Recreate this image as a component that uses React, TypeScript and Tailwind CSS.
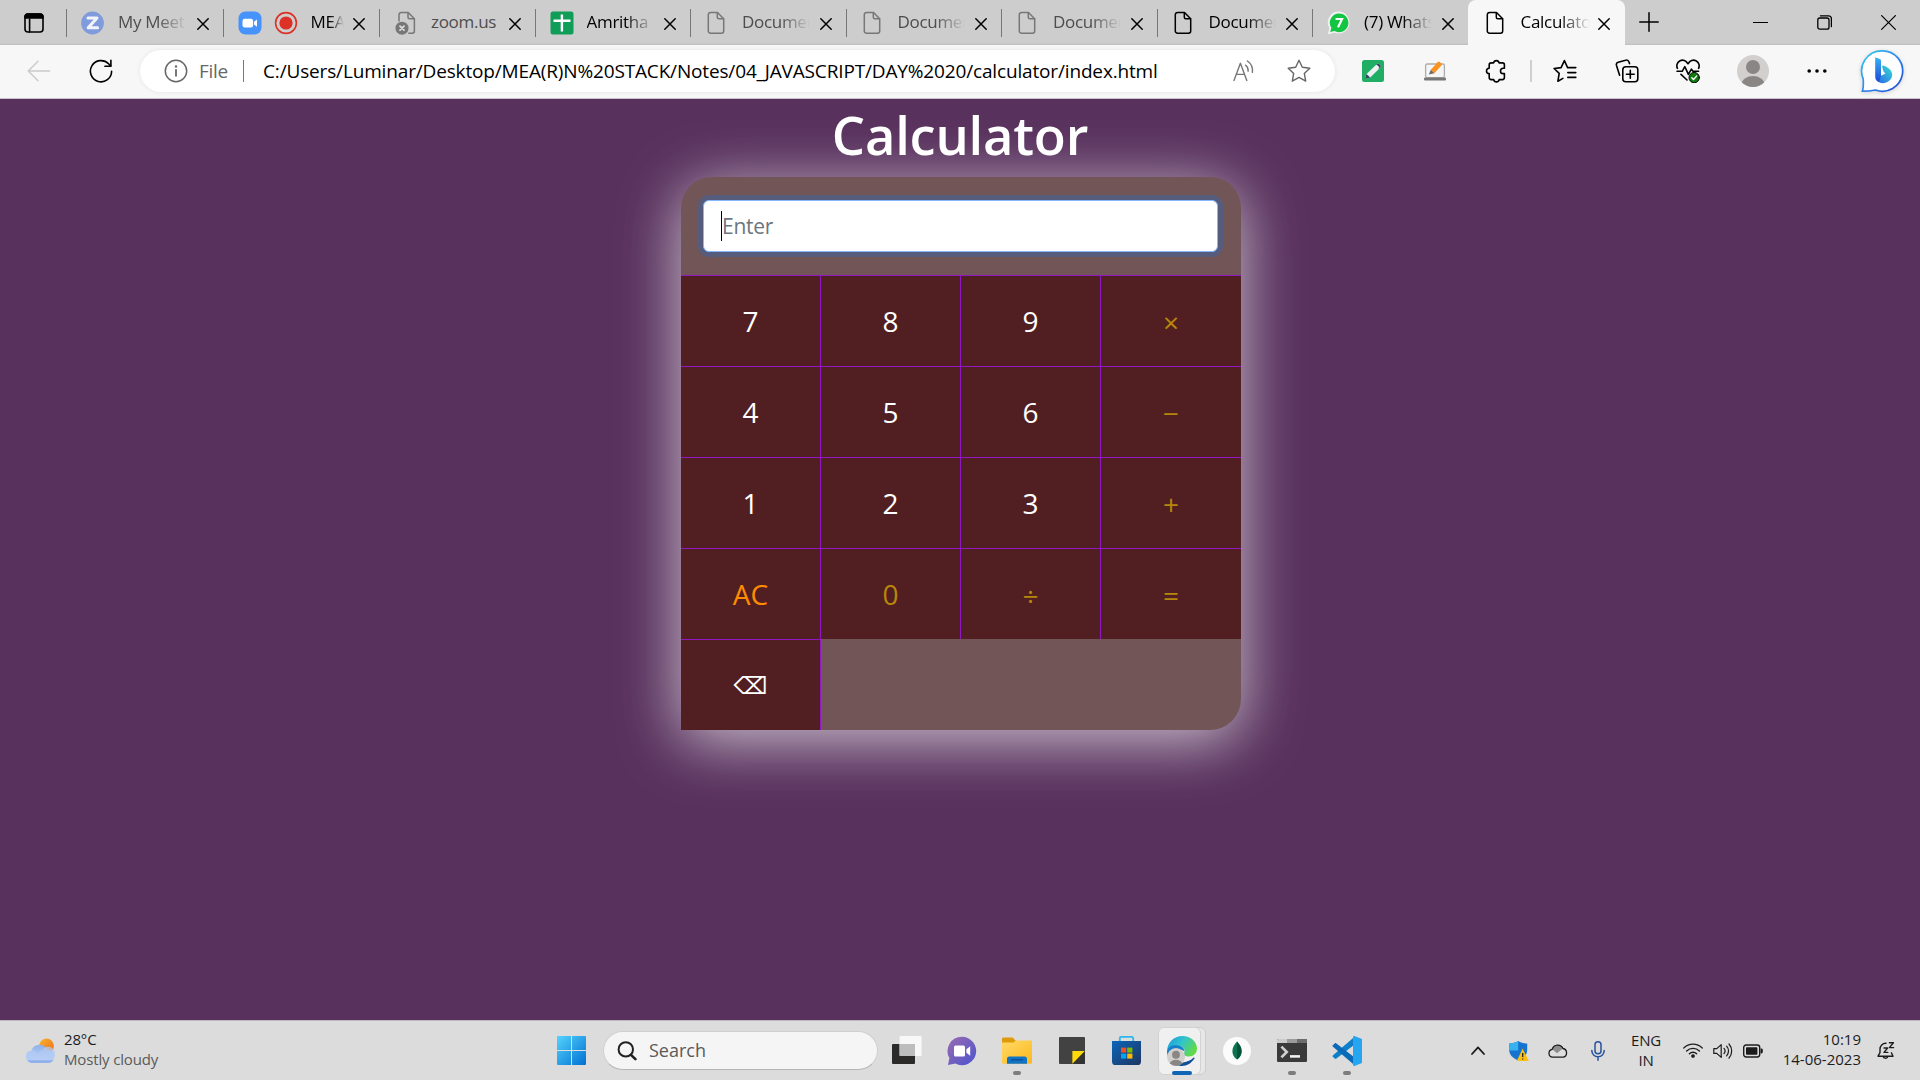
import React from "react";

type IconProps = { className?: string };

const line = {
  fill: "none",
  stroke: "currentColor",
  strokeLinecap: "round" as const,
  strokeLinejoin: "round" as const,
};

/* ---------- Tab strip icons ---------- */

function WorkspaceIcon() {
  return (
    <svg viewBox="0 0 20 20" className="h-5 w-5 text-black" {...line} strokeWidth={1.6}>
      <rect x="1" y="1" width="18" height="18" rx="3" />
      <path d="M1 5V4a3 3 0 0 1 3-3h12a3 3 0 0 1 3 3v1z" fill="currentColor" />
      <path d="M5.6 6v13" />
    </svg>
  );
}

function CloseX() {
  return (
    <svg viewBox="0 0 12 12" className="h-3 w-3 text-black" {...line} strokeWidth={1.5}>
      <path d="M.8.8l10.4 10.4M11.2.8.8 11.2" />
    </svg>
  );
}

function PageIcon({ className = "" }: IconProps) {
  return (
    <svg viewBox="0 0 22 24" className={"h-6 w-[22px] " + className} {...line} strokeWidth={1.5}>
      <path d="M4.5 1.5h7l6.2 6.2v12.3a2.2 2.2 0 0 1-2.2 2.2h-11A2.2 2.2 0 0 1 2.3 20V3.7a2.2 2.2 0 0 1 2.2-2.2z" />
      <path d="M11.3 1.7v4.6a1.5 1.5 0 0 0 1.5 1.5h4.7" />
    </svg>
  );
}

function BrokenPageIcon() {
  return (
    <svg viewBox="0 0 22 24" className="h-6 w-[22px] text-[#777]" {...line} strokeWidth={1.5}>
      <path d="M4 10V3.7a2.2 2.2 0 0 1 2.2-2.2h7l6.2 6.2V20a2.2 2.2 0 0 1-2.2 2.2h-3.4" />
      <path d="M13 1.7v4.6a1.5 1.5 0 0 0 1.5 1.5h4.7" />
      <circle cx="7" cy="17.2" r="5.8" fill="currentColor" />
      <path d="M5 15.2l4 4m0-4l-4 4" stroke="#ddd" strokeWidth={1.8} />
    </svg>
  );
}

function ZIcon() {
  return (
    <svg viewBox="0 0 24 24" className="h-6 w-6" fill="none">
      <circle cx="11.5" cy="12" r="11.4" fill="#7f9bdb" />
      <path d="M7 7h9L7.2 16.8h9.4" stroke="#f2f4fb" strokeWidth="3" strokeLinejoin="round" strokeLinecap="round" />
    </svg>
  );
}

function ZoomIcon() {
  return (
    <svg viewBox="0 0 24 24" className="h-6 w-6">
      <rect x=".5" y=".5" width="23" height="23" rx="7" fill="#4593fb" />
      <rect x="4.5" y="7.8" width="10.6" height="8.6" rx="2.2" fill="#fff" />
      <path d="M16 10.8l3-2.4v7.4l-3-2.4z" fill="#fff" />
    </svg>
  );
}

function RecordIcon() {
  return (
    <svg viewBox="0 0 24 24" className="h-6 w-6">
      <circle cx="12" cy="12" r="10.4" fill="none" stroke="#dd3127" strokeWidth="1.6" />
      <circle cx="12" cy="12" r="6.6" fill="#dd3127" />
    </svg>
  );
}

function SheetIcon() {
  return (
    <svg viewBox="0 0 24 24" className="h-6 w-6">
      <rect x=".5" y=".5" width="23" height="23" rx="2.5" fill="#109d58" />
      <path d="M11.9 3.5v17M3.5 9.8h17" stroke="#fff" strokeWidth="2.4" />
    </svg>
  );
}

function WhatsAppIcon() {
  return (
    <svg viewBox="0 0 24 24" className="h-6 w-6">
      <path d="M12 .6a11 11 0 1 1-4.6 21.2L.8 23.2l1.6-6A11 11 0 0 1 12 .6z" fill="#f1f1f1" />
      <path d="M12 2.4a9.4 9.4 0 1 1-4.6 17.6L3.2 21l1.2-4A9.4 9.4 0 0 1 12 2.4z" fill="#14c443" />
      <path d="M8.6 8h6.4l-4 8.4" fill="none" stroke="#fff" strokeWidth="2.2" />
    </svg>
  );
}

/* ---------- Toolbar icons ---------- */

function BackIcon() {
  return (
    <svg viewBox="0 0 24 22" className="h-[22px] w-6 text-[#cacaca]" {...line} strokeWidth={1.4}>
      <path d="M22.6 11H1.2M11 1.2 1.2 11l9.8 9.8" />
    </svg>
  );
}

function ReloadIcon() {
  return (
    <svg viewBox="0 0 24 24" className="h-6 w-6 text-black" {...line} strokeWidth={1.6}>
      <path d="M22.6 12.2A10.6 10.6 0 1 1 19.6 4.8l2 2.3" />
      <path d="M21.9 1.2v6h-6" />
    </svg>
  );
}

function InfoIcon() {
  return (
    <svg viewBox="0 0 24 24" className="h-6 w-6 text-[#676767]" {...line} strokeWidth={1.5}>
      <circle cx="12" cy="12" r="10.7" />
      <path d="M12 10.8v6" strokeWidth={1.8} />
      <circle cx="12" cy="7.4" r=".5" fill="currentColor" />
    </svg>
  );
}

function ReadAloudIcon() {
  return (
    <svg viewBox="0 0 22 22" className="h-[22px] w-[22px] text-[#777]" {...line} strokeWidth={1.4}>
      <path d="M1 20.5 7.4 3.2l6.4 17.3M3.2 14.4h8.4" />
      <path d="M12.6 5.2a6.5 6.5 0 0 1 2.5 6M14.4 1a12 12 0 0 1 5 11.4" />
    </svg>
  );
}

function StarIcon() {
  return (
    <svg viewBox="0 0 24 24" className="h-6 w-6 text-[#666]" {...line} strokeWidth={1.4}>
      <path d="M12 1.3l3.3 6.9 7.5 1-5.5 5.2 1.4 7.7L12 18.4l-6.7 3.7 1.4-7.7L1.2 9.2l7.5-1z" />
    </svg>
  );
}

function GreenPenIcon() {
  return (
    <svg viewBox="0 0 24 24" className="h-6 w-6">
      <rect x="1" y="1" width="22" height="22" rx="2.5" fill="#1fae64" />
      <path d="M4 20l1.600-5L15.600 5.200a2 2 0 0 1 2.800 0l.8.800a2 2 0 0 1 0 2.800L9.200 18.600z" fill="#eef0f1" />
      <path d="M14.600 6.200l1-1a2 2 0 0 1 2.800 0l.8.800a2 2 0 0 1 0 2.800l-1 1-.8-.4 1-1.200-2.600-2.400z" fill="#2d4a5e" />
      <path d="M4 20l1.600-5 3.600 3.600z" fill="#2d4a5e" />
    </svg>
  );
}

function LaptopPenIcon() {
  return (
    <svg viewBox="0 0 24 22" className="h-[22px] w-6">
      <rect x="2.6" y="4" width="18.800" height="13.600" rx="1.5" fill="#f5f5f5" stroke="#adadad" strokeWidth="1.3" />
      <rect x="1" y="17.4" width="22" height="3.200" rx="1" fill="#777" />
      <path d="M7.800 9.800l7-7.800a1.400 1.400 0 0 1 2 0l1.600 1.400a1.400 1.400 0 0 1 0 2l-7 7.800z" fill="#f9921f" />
      <path d="M5.800 14.400l2-4.600 3.600 3.400z" fill="#6b6b6b" />
    </svg>
  );
}

function PuzzleIcon() {
  return (
    <svg viewBox="0 0 22 24" className="h-6 w-[22px] text-black" {...line} strokeWidth={1.6}>
      <path d="M6.200 3.900h2.400a2.800 2.800 0 0 1 5.500 0h3.300a2 2 0 0 1 2 2v3.300h-1.200a2.700 2.700 0 0 0 0 5.400h1.200v4a2 2 0 0 1-2 2h-3.200a2.800 2.800 0 0 1-5.500 0H6.200a2 2 0 0 1-2-2v-4a2.700 2.700 0 0 1 0-5.400V5.900a2 2 0 0 1 2-2z" />
    </svg>
  );
}

function FavoritesIcon() {
  return (
    <svg viewBox="0 0 24 24" className="h-6 w-6 text-black" {...line} strokeWidth={1.6}>
      <path d="M14.600 8.600l-3.200-7-3.300 7-7 .9 5.100 4.800-1.300 7.900 5-2.800M14.600 8.600h8.200M14.800 13.600h8M14.800 18.400h8" />
    </svg>
  );
}

function CollectionsIcon() {
  return (
    <svg viewBox="0 0 24 24" className="h-6 w-6 text-black" {...line} strokeWidth={1.6}>
      <rect x="7.8" y="7.8" width="15" height="15" rx="3" />
      <path d="M15.3 11.4v7.8M11.4 15.3h7.8M4.600 16.200 1.500 6.400a2.600 2.600 0 0 1 1.700-3.200L10.600 1.200A2.600 2.600 0 0 1 14 3l.5 1.600" />
    </svg>
  );
}

function HealthIcon() {
  return (
    <svg viewBox="0 0 24 24" className="h-6 w-6" {...line}>
      <g stroke="#000" strokeWidth={1.6}>
        <path d="M1.4 9.3a5.6 5.6 0 0 1 10.2-4.9l.4.4.4-.4a5.6 5.6 0 0 1 10.200 4.900M5 15.400l6 5.600" />
        <path d="M1 12.300h5.200l2.600-4.600 3.600 7.600 3-5.200 1.600 2.200h5.600" />
      </g>
      <circle cx="18.2" cy="18.6" r="5.2" fill="#107c10" />
      <path d="M15.800 18.800l1.700 1.700 3.100-3.400" stroke="#fff" strokeWidth={1.4} />
    </svg>
  );
}

function AvatarIcon({ className = "" }: IconProps) {
  return (
    <svg viewBox="0 0 32 32" className={className}>
      <defs>
        <clipPath id="avatar-clip">
          <circle cx="16" cy="16" r="16" />
        </clipPath>
      </defs>
      <circle cx="16" cy="16" r="16" fill="#d2d0ce" />
      <g clipPath="url(#avatar-clip)" fill="#8a8683">
        <circle cx="16" cy="12" r="7" />
        <ellipse cx="16" cy="29.5" rx="11.4" ry="8.4" />
      </g>
    </svg>
  );
}

function BingIcon() {
  return (
    <svg viewBox="0 0 44 44" className="h-11 w-11 drop-shadow-sm">
      <defs>
        <linearGradient id="bing-ring" x1="0" y1="0" x2="1" y2="1">
          <stop offset="0" stopColor="#2fd0f0" />
          <stop offset=".5" stopColor="#2f86ee" />
          <stop offset="1" stopColor="#1b4ad0" />
        </linearGradient>
        <linearGradient id="bing-b" x1="0" y1="0" x2="0" y2="1">
          <stop offset="0" stopColor="#37b5f3" />
          <stop offset="1" stopColor="#1b48d6" />
        </linearGradient>
        <linearGradient id="bing-bowl" x1="1" y1="0" x2="0" y2="1">
          <stop offset="0" stopColor="#35dfd3" />
          <stop offset="1" stopColor="#2a62e8" />
        </linearGradient>
      </defs>
      <path d="M22.3 1.800a20.200 20.200 0 1 1-6.700 39.200c-3.600.6-8 1.300-13.200 1.200 1.400-4 1-7 .8-12.400A20.200 20.200 0 0 1 22.300 1.800z" fill="#fff" stroke="url(#bing-ring)" strokeWidth="1.7" />
      <path d="M23 16.400c.8 0 9.200 2.800 9.200 9.200 0 5-4.600 8.600-9.400 8.600-3.600 0-6.600-2-7.400-4.600l10.200-5.200-1.800-1.400c-.8-2-1.600-4.400-1.600-5.400 0-.8.3-1.200.8-1.200z" fill="url(#bing-bowl)" />
      <path d="M15.200 8.200l4.600 1.900c.8.300 1.200.8 1.200 1.700v15.400l-2 5.800c-2.400-.8-3.800-3-3.800-5.400z" fill="url(#bing-b)" />
    </svg>
  );
}

/* ---------- Taskbar icons ---------- */

function WeatherIcon() {
  return (
    <svg viewBox="0 0 30 26" className="h-[26px] w-[30px]">
      <defs>
        <linearGradient id="sun" x1="0" y1="0" x2="1" y2="1">
          <stop offset="0" stopColor="#f7b52c" />
          <stop offset="1" stopColor="#ee6c1b" />
        </linearGradient>
        <linearGradient id="cloud" x1="0" y1="0" x2="0" y2="1">
          <stop offset="0" stopColor="#8fb0ea" />
          <stop offset="1" stopColor="#c9dcf7" />
        </linearGradient>
      </defs>
      <circle cx="21.5" cy="8" r="7.4" fill="url(#sun)" />
      <path d="M6.200 13.200A8.400 8.400 0 0 1 22 11.800a6.600 6.600 0 0 1 1.600 13.100H6.200a5.900 5.900 0 0 1 0-11.700z" fill="url(#cloud)" />
      <path d="M1 18a5.900 5.900 0 0 1 11.400-2.200 6.600 6.600 0 0 1 5-3.400 6.600 6.600 0 0 1 12 6.600 6.600 6.600 0 0 1-5.800 5.900H6.200A5.900 5.900 0 0 1 1 18z" fill="#b3cbf4" opacity=".75" />
      <path d="M2.400 22.200h26a6.600 6.600 0 0 1-4.800 2.700H6.200a6 6 0 0 1-3.800-2.700z" fill="#7fa2e6" opacity=".7" />
    </svg>
  );
}

function StartIcon() {
  return (
    <svg viewBox="0 0 29 29" className="h-[29px] w-[29px]">
      <defs>
        <linearGradient id="win" gradientUnits="userSpaceOnUse" x1="0" y1="0" x2="29" y2="29">
          <stop offset="0" stopColor="#55d3fd" />
          <stop offset="1" stopColor="#0070d2" />
        </linearGradient>
      </defs>
      <path d="M1 0h13v14H0V1a1 1 0 0 1 1-1zM15 0h13a1 1 0 0 1 1 1v13H15zM0 15h14v14H1a1 1 0 0 1-1-1zM15 15h14v13a1 1 0 0 1-1 1H15z" fill="url(#win)" />
    </svg>
  );
}

function SearchIcon() {
  return (
    <svg viewBox="0 0 20 20" className="h-5 w-5 text-[#222]" {...line} strokeWidth={2}>
      <circle cx="8.8" cy="8.4" r="7.2" />
      <path d="M14 13.8l4.4 4.4" strokeWidth={2.6} />
    </svg>
  );
}

function TaskViewIcon() {
  return (
    <svg viewBox="0 0 30 29" className="h-[29px] w-[30px]">
      <rect x="0" y="8" width="23" height="20" rx="1" fill="#2b2a29" />
      <rect x="7.6" y="0" width="22" height="20" rx="1" fill="#f8f8f8" />
      <rect x="7.6" y="8" width="15.4" height="12" fill="#bdbdbd" />
    </svg>
  );
}

function ChatIcon() {
  return (
    <svg viewBox="0 0 30 30" className="h-[30px] w-[30px]">
      <defs>
        <linearGradient id="chat" x1="0" y1="0" x2="1" y2="1">
          <stop offset="0" stopColor="#9a6cb0" />
          <stop offset="1" stopColor="#4b53cf" />
        </linearGradient>
      </defs>
      <path d="M15 .8a14.200 14.200 0 1 1-6.600 26.800L1 29l1.400-7A14.200 14.200 0 0 1 15 .8z" fill="url(#chat)" />
      <rect x="7" y="9.6" width="11" height="11" rx="1.6" fill="#fff" />
      <path d="M19.400 13.200l3.800-3v9.600l-3.800-3z" fill="#fff" />
    </svg>
  );
}

function ExplorerIcon() {
  return (
    <svg viewBox="0 0 30 28" className="h-7 w-[30px]">
      <defs>
        <linearGradient id="folder" x1="0" y1="0" x2="1" y2="1">
          <stop offset="0" stopColor="#ffda68" />
          <stop offset="1" stopColor="#fcb81c" />
        </linearGradient>
      </defs>
      <path d="M0 2a1.400 1.400 0 0 1 1.400-1.400h9.200L14 4H30v6H0z" fill="#dd9a09" />
      <path d="M0 5.600h11.400l2.800-2H28.600A1.400 1.400 0 0 1 30 5v20.400a1.400 1.400 0 0 1-1.400 1.400H1.400A1.400 1.400 0 0 1 0 25.400z" fill="url(#folder)" />
      <path d="M5 26.800v-5a2.400 2.400 0 0 1 2.400-2.400h15.200A2.400 2.400 0 0 1 25 21.800v5z" fill="#1073c6" />
      <path d="M9 22.800h12" stroke="#0a4c8c" strokeWidth="1.2" />
    </svg>
  );
}

function StickyIcon() {
  return (
    <svg viewBox="0 0 26 27" className="h-[27px] w-[26px]">
      <rect width="26" height="27" rx="1" fill="#424242" />
      <path d="M13.400 14H26L13.400 27z" fill="#ffd90a" />
      <path d="M26 14v12a1 1 0 0 1-1 1H13.400z" fill="#333" />
    </svg>
  );
}

function StoreIcon() {
  return (
    <svg viewBox="0 0 29 29" className="h-[29px] w-[29px]">
      <defs>
        <linearGradient id="store" x1="0" y1="0" x2="1" y2="1">
          <stop offset="0" stopColor="#0b66ba" />
          <stop offset="1" stopColor="#1e3560" />
        </linearGradient>
      </defs>
      <path d="M7.800 6V2.200A1.300 1.300 0 0 1 9.100.9h10.800a1.300 1.300 0 0 1 1.300 1.300V6" fill="none" stroke="#2cb6ee" strokeWidth="1.8" />
      <path d="M0 5h29v20.400a3.600 3.600 0 0 1-3.600 3.600H3.600A3.600 3.600 0 0 1 0 25.400z" fill="url(#store)" />
      <path d="M9 11.600h5.200v5H9z" fill="#f25022" />
      <path d="M15.200 11.600h5.200v5h-5.200z" fill="#7fba00" />
      <path d="M9 17.600h5.200v5H9z" fill="#00a4ef" />
      <path d="M15.200 17.600h5.200v5h-5.200z" fill="#ffb900" />
    </svg>
  );
}

function EdgeIcon() {
  return (
    <svg viewBox="0 0 30 30" className="h-[30px] w-[30px]">
      <defs>
        <linearGradient id="edge-top" x1="0" y1="0" x2="1" y2=".5">
          <stop offset="0" stopColor="#1b93dc" />
          <stop offset=".5" stopColor="#2fc3cf" />
          <stop offset="1" stopColor="#62d94b" />
        </linearGradient>
      </defs>
      <path d="M27.800 22c-3 5-7.800 8-13 8-7 0-10-5-9.800-9.600 2 4.600 6 6.400 11 6 4.600-.4 7.800-2 10.600-4.800z" fill="#124f97" />
      <path d="M0 15C.4 6.600 7 0 15.200 0 24 0 30 6 30 12.600c0 4.800-3.600 8-8 8-3.600 0-6-1.600-5-3.400 1.400-2.400.6-6.600-4.800-7.200C6 9.400.8 12 0 15z" fill="url(#edge-top)" />
      <path d="M0 15c1-4.600 6.200-6.400 11-5.600 4.600.6 6.600 3.400 6.400 6-4-3.600-9.600-1-9.800 5 0 4 2.400 8 6.400 9.600C5.600 30-.4 23 0 15z" fill="#167fcb" />
    </svg>
  );
}

function MongoIcon() {
  return (
    <svg viewBox="0 0 28 28" className="h-7 w-7">
      <circle cx="14" cy="14" r="14" fill="#fbfbfb" />
      <path d="M14 4.600c2.600 2.800 4.600 5.800 4.600 9.600 0 3.600-1.800 6.400-4.600 8.400-2.800-2-4.600-4.800-4.600-8.400 0-3.800 2-6.800 4.600-9.600z" fill="#0a7350" />
      <path d="M14 4.600c2.600 2.800 4.600 5.800 4.600 9.600 0 3.600-1.800 6.400-4.600 8.400z" fill="#06513a" />
    </svg>
  );
}

function TerminalIcon() {
  return (
    <svg viewBox="0 0 30 23" className="h-[23px] w-[30px]">
      <rect width="30" height="23" rx="1.2" fill="#3a3a3a" />
      <path d="M1.200 0H10v4H0V1.200A1.200 1.200 0 0 1 1.200 0z" fill="#cbcbcb" />
      <path d="M10 0h10v4H10z" fill="#9b9b9b" />
      <path d="M20 0h8.800A1.200 1.200 0 0 1 30 1.200V4H20z" fill="#6c6c6c" />
      <path d="M4.400 7.600l5.400 5.400-5.400 5.400" fill="none" stroke="#d0d0d0" strokeWidth="2.6" />
      <path d="M13 17.400h10" stroke="#f0f0f0" strokeWidth="2.6" />
    </svg>
  );
}

function CodeIcon() {
  return (
    <svg viewBox="0 0 30 30" className="h-[30px] w-[30px]">
      <path d="M22 1.200 1 19.200a1.200 1.200 0 0 0 0 1.800l1.800 1.600c.4.400 1 .4 1.600 0L22 9z" fill="#0f7fca" />
      <path d="M22 28.800 1 10.800A1.200 1.200 0 0 1 1 9l1.800-1.600c.4-.4 1-.4 1.600 0L22 21z" fill="#0a6ab8" />
      <path d="M22.400 0 30 3v24l-7.600 3c-.8 0-1.400-.4-1.400-1.200V1.200c0-.8.6-1.200 1.400-1.200z" fill="#26a5f1" />
    </svg>
  );
}

function ShieldIcon() {
  return (
    <svg viewBox="0 0 20 20" className="h-5 w-5">
      <path d="M9.200 0c2.600 1.800 5.600 2.400 9 2.400V9c0 4.800-3.600 8.200-9 10.200C3.800 17.200.2 13.800.2 9V2.400C3.600 2.400 6.600 1.800 9.200 0z" fill="#1673cf" />
      <path d="M9.200 0v9.600h-9V2.400C3.600 2.400 6.600 1.800 9.200 0z" fill="#36b2ee" />
      <path d="M13.600 7.600 19.800 20H7.800z" fill="#fbbf12" />
      <path d="M13.700 12v4M13.700 17.400v1.200" stroke="#222" strokeWidth="1.3" />
    </svg>
  );
}

function OneDriveIcon() {
  return (
    <svg viewBox="0 0 20 14" className="h-[14px] w-5">
      <path d="M4.600 13.200A4 4 0 0 1 4.200 5.300 5.800 5.800 0 0 1 15 4.500a4.500 4.500 0 0 1 .4 8.700z" fill="#dedede" />
      <path d="M4.200 5.300A5.800 5.800 0 0 1 15 4.500L9 9.200z" fill="#8e8e8e" />
      <path d="M4.600 13.200A4 4 0 0 1 4.200 5.300 5.800 5.800 0 0 1 15 4.500a4.500 4.500 0 0 1 .4 8.700z" fill="none" stroke="#1c1c1c" strokeWidth="1.3" />
    </svg>
  );
}

function MicIcon() {
  return (
    <svg viewBox="0 0 14 20" className="h-5 w-[14px] text-[#25539c]" {...line} strokeWidth={1.5}>
      <rect x="4" y=".8" width="6" height="12" rx="3" />
      <path d="M.8 9.600a6.200 6.200 0 0 0 12.400 0M7 16v3.200" />
    </svg>
  );
}

function WifiIcon() {
  return (
    <svg viewBox="0 0 20 15" className="h-[15px] w-5 text-[#1c1c1c]" {...line} strokeWidth={1.3}>
      <path d="M.8 5a13 13 0 0 1 18.400 0M3.600 8a9 9 0 0 1 12.800 0M6.400 10.800a5 5 0 0 1 7.200 0" />
      <circle cx="10" cy="13" r="1.2" fill="currentColor" />
    </svg>
  );
}

function SpeakerIcon() {
  return (
    <svg viewBox="0 0 20 16" className="h-4 w-5 text-[#1c1c1c]" {...line} strokeWidth={1.2}>
      <path d="M.8 5.600h3L8.200 1.600v12.800L3.800 10.400h-3z" />
      <path d="M11 5.400a4 4 0 0 1 0 5.200M13.600 3.200a7 7 0 0 1 0 9.600M16 1a10.500 10.500 0 0 1 0 14" />
    </svg>
  );
}

function BatteryIcon() {
  return (
    <svg viewBox="0 0 20 14" className="h-[14px] w-5 text-[#1c1c1c]">
      <rect x=".7" y="1" width="16" height="12" rx="2.4" fill="none" stroke="currentColor" strokeWidth="1.4" />
      <rect x="3" y="3.3" width="11.4" height="7.4" rx=".8" fill="currentColor" />
      <path d="M17.600 4.600h.8a1.400 1.400 0 0 1 1.400 1.400v2a1.400 1.400 0 0 1-1.400 1.400h-.8z" fill="currentColor" />
    </svg>
  );
}

function BellIcon() {
  return (
    <svg viewBox="0 0 18 18" className="h-[18px] w-[18px] text-[#1c1c1c]" {...line} strokeWidth={1.4}>
      <path d="M9 1.200A5.800 5.800 0 0 0 3 7.200v3.400L1 14.200h15l-1.600-3.400M6 14.400a2.600 2.600 0 0 0 5 0" />
      <path d="M7 6h3.600L7 10.400h3.800M12.400.8h4l-4 4.800h4.200" />
    </svg>
  );
}

/* ---------- Tabs ---------- */

type Tab = { icon: React.ReactNode; title: string; dim?: boolean; extra?: React.ReactNode };

const tabs: Tab[] = [
  { icon: <ZIcon />, title: "My Meet", dim: true },
  { icon: <ZoomIcon />, extra: <RecordIcon />, title: "MEA" },
  { icon: <BrokenPageIcon />, title: "zoom.us", dim: true },
  { icon: <SheetIcon />, title: "Amritha" },
  { icon: <PageIcon className="text-[#777]" />, title: "Documen", dim: true },
  { icon: <PageIcon className="text-[#777]" />, title: "Documen", dim: true },
  { icon: <PageIcon className="text-[#777]" />, title: "Documen", dim: true },
  { icon: <PageIcon className="text-black" />, title: "Documen" },
  { icon: <WhatsAppIcon />, title: "(7) Whats" },
];

const fade = "[mask-image:linear-gradient(to_right,black_55%,transparent_97%)]";

function TabStrip() {
  return (
    <div className="flex h-[45px] bg-[#cdcdcd] shadow-[inset_0_-2px_2px_-1px_#bdbdbd]">
      <div className="flex h-[45px] w-[66px] shrink-0 items-center pl-6">
        <WorkspaceIcon />
      </div>
      {tabs.map((tab, i) => (
        <div
          key={i}
          className={"flex h-[45px] shrink-0 items-center " + (i < 2 ? "w-[156.5px]" : "w-[155.5px]")}
        >
          <div className="h-[28px] w-px shrink-0 bg-[#777]" />
          <div className="ml-[14px] flex w-6 shrink-0 justify-center">{tab.icon}</div>
          {tab.extra && <div className="ml-3 shrink-0">{tab.extra}</div>}
          <div
            className={
              "-mt-0.5 ml-[13px] flex-1 overflow-hidden whitespace-nowrap text-[17px] tracking-[-0.3px] " +
              (tab.title === "zoom.us" ? "" : fade) +
              (tab.dim ? " text-[#4d4d4d]" : " text-black")
            }
          >
            {tab.title}
          </div>
          <div className="mt-0.5 mr-[14px] ml-2 shrink-0">
            <CloseX />
          </div>
        </div>
      ))}
      <div className="flex h-[45px] w-[157px] shrink-0 items-center rounded-t-lg bg-[#f7f7f7]">
        <div className="ml-[17px] shrink-0">
          <PageIcon className="text-black" />
        </div>
        <div className={"-mt-0.5 ml-[14px] flex-1 overflow-hidden whitespace-nowrap text-[17px] tracking-[-0.3px] text-black " + fade}>
          Calculato
        </div>
        <div className="mt-0.5 mr-[15px] ml-1.5 shrink-0">
          <CloseX />
        </div>
      </div>
      <svg viewBox="0 0 20 20" className="mt-3 ml-[14px] h-5 w-5 text-black" {...line} strokeWidth={1.5}>
        <path d="M10 .8v18.400M.8 10h18.400" />
      </svg>
      <div className="ml-auto flex h-[45px] items-center pr-6 text-black">
        <svg viewBox="0 0 15 15" className="h-[15px] w-[15px]" {...line} strokeWidth={1.2}>
          <path d="M.5 7.500h14" />
        </svg>
        <svg viewBox="0 0 15 15" className="ml-[49px] h-[15px] w-[15px]" {...line} strokeWidth={1.3}>
          <rect x=".8" y="3" width="11.2" height="11.2" rx="2" />
          <path d="M3.400.8h8.200a2.800 2.800 0 0 1 2.800 2.800v8" />
        </svg>
        <svg viewBox="0 0 15 15" className="ml-[49px] h-[15px] w-[15px]" {...line} strokeWidth={1.2}>
          <path d="M.6.6l13.800 13.800M14.400.6.6 14.400" />
        </svg>
      </div>
    </div>
  );
}

function Toolbar() {
  return (
    <div className="flex h-[54px] items-center border-b border-[#c9c3cb] bg-[#f7f7f7] pb-px pl-[27px]">
      <BackIcon />
      <div className="ml-[38px]">
        <ReloadIcon />
      </div>
      <div className="ml-[27px] flex h-[42px] w-[1195px] shrink-0 items-center rounded-full bg-white shadow-[0_0_4px_#e4e4e4]">
        <div className="ml-6 shrink-0">
          <InfoIcon />
        </div>
        <span className="ml-[11px] w-[30px] whitespace-nowrap text-[19px] tracking-[-0.3px] text-[#676767]">File</span>
        <div className="ml-[14px] h-[22px] w-px bg-[#777]" />
        <span className="ml-[19px] w-[897px] whitespace-nowrap text-[19px] tracking-[-0.155px] text-black">
          C:/Users/Luminar/Desktop/MEA(R)N%20STACK/Notes/04_JAVASCRIPT/DAY%2020/calculator/index.html
        </span>
        <div className="ml-auto shrink-0">
          <ReadAloudIcon />
        </div>
        <div className="mr-6 ml-8 shrink-0">
          <StarIcon />
        </div>
      </div>
      <div className="flex flex-1 items-center">
        <div className="ml-[26px]">
          <GreenPenIcon />
        </div>
        <div className="ml-[38px]">
          <LaptopPenIcon />
        </div>
        <div className="ml-[38px]">
          <PuzzleIcon />
        </div>
        <div className="ml-[23px] h-[22px] w-[2px] bg-[#cfcfcf]" />
        <div className="ml-[21px]">
          <FavoritesIcon />
        </div>
        <div className="ml-[38px]">
          <CollectionsIcon />
        </div>
        <div className="ml-[37px]">
          <HealthIcon />
        </div>
        <AvatarIcon className="ml-[37px] h-8 w-8" />
        <svg viewBox="0 0 20 4" className="ml-[38px] h-1 w-5" fill="#000">
          <circle cx="2.2" cy="2" r="1.8" />
          <circle cx="10" cy="2" r="1.8" />
          <circle cx="17.8" cy="2" r="1.8" />
        </svg>
        <div className="ml-[33px]">
          <BingIcon />
        </div>
      </div>
    </div>
  );
}

/* ---------- Calculator ---------- */

const keys = [
  ["7", "8", "9", "×"],
  ["4", "5", "6", "−"],
  ["1", "2", "3", "+"],
  ["AC", "0", "÷", "="],
  ["⌫"],
];

function keyStyle(label: string) {
  if (label === "AC") return "text-[28px] text-[#ff8c00]";
  if (label === "⌫") return "text-[24px] text-white";
  if (label === "0") return "text-[28px] text-[#b8860b]";
  if ("×−+÷=".includes(label)) return "pt-0.5 text-[28px] text-[#b8860b]";
  return "text-[28px] text-white";
}

function Calculator() {
  return (
    <main className="flex h-[921px] flex-col items-center overflow-hidden bg-[#58315d]">
      <h1 className="mt-[2px] h-[76px] text-[52.5px] leading-[68px] font-semibold tracking-[-0.2px] text-white">Calculator</h1>
      <div className="ml-0.5 w-[560px] rounded-t-[31px] rounded-br-[31px] bg-[#725657] shadow-[0_10px_62px_0_rgba(255,255,255,0.72)]">
        <div className="pt-[23px] pr-[23px] pb-[23px] pl-[22px]">
          <div className="flex h-[52px] items-center rounded-[6px] border border-[#86b7fe] bg-white px-[17px] shadow-[0_0_0_5px_rgba(45,103,180,0.4)]">
            <div className="h-[30px] w-px bg-black" />
            <span className="mt-0.5 text-[21px] tracking-[-0.25px] text-[#6c757d]">Enter</span>
          </div>
        </div>
        <div className="grid grid-cols-4">
          {keys.flatMap((row) =>
            row.map((label, col) => (
              <button
                key={label}
                className={
                  "flex h-[91px] items-center justify-center border-t border-[#9117c4] bg-[#511f21] " +
                  (col < 3 ? "border-r " : "") +
                  keyStyle(label)
                }
              >
                {label}
              </button>
            ))
          )}
        </div>
      </div>
    </main>
  );
}

/* ---------- Taskbar ---------- */

function TaskSlot({ children, mark = "" }: { children: React.ReactNode; mark?: string }) {
  return (
    <div className="relative flex h-[60px] w-[55.1px] shrink-0 items-center justify-center">
      {children}
      {mark && <div className={"absolute bottom-[6px] h-1 rounded-full " + mark} />}
    </div>
  );
}

function Taskbar() {
  return (
    <footer className="flex h-[60px] items-center border-t border-[#bdb5be] bg-[#dcdcdc] text-[#1c1c1c]">
      <div className="flex w-[557px] shrink-0 items-center pl-[25px]">
        <WeatherIcon />
        <div className="-mt-1 ml-[9px] text-[15px] leading-5 tracking-[-0.15px]">
          <div>28°C</div>
          <div className="text-[#5a5a5a]">Mostly cloudy</div>
        </div>
      </div>
      <StartIcon />
      <div className="ml-[17px] flex h-[39px] w-[275px] shrink-0 items-center rounded-full border border-[#cfcfcf] border-b-[#b5b5b5] bg-[#f5f5f5] pl-[13px]">
        <SearchIcon />
        <span className="ml-3 text-[18px] text-[#5a5a5a]">Search</span>
      </div>
      <div className="ml-px flex shrink-0">
        <TaskSlot>
          <TaskViewIcon />
        </TaskSlot>
        <TaskSlot>
          <ChatIcon />
        </TaskSlot>
        <TaskSlot mark="w-2 bg-[#7d7d7d]">
          <ExplorerIcon />
        </TaskSlot>
        <TaskSlot>
          <StickyIcon />
        </TaskSlot>
        <TaskSlot>
          <StoreIcon />
        </TaskSlot>
        <TaskSlot mark="w-5 bg-[#0f66b5]">
          <div className="absolute top-[6px] left-[9px] h-[48px] w-[43px] rounded-md border border-[#cdcdcd] bg-[#e7e7e7]" />
          <div className="absolute top-[6px] left-1 h-[48px] w-[43px] rounded-md border border-[#d2d2d2] bg-[#f0f0f0]" />
          <div className="relative">
            <EdgeIcon />
            <AvatarIcon className="absolute bottom-0 left-0 h-[18px] w-[18px]" />
          </div>
        </TaskSlot>
        <TaskSlot>
          <MongoIcon />
        </TaskSlot>
        <TaskSlot mark="w-2 bg-[#7d7d7d]">
          <TerminalIcon />
        </TaskSlot>
        <TaskSlot mark="w-2 bg-[#7d7d7d]">
          <CodeIcon />
        </TaskSlot>
      </div>
      <div className="ml-auto flex shrink-0 items-center pr-[25px]">
        <svg viewBox="0 0 14 9" className="h-[9px] w-[14px]" {...line} strokeWidth={1.8}>
          <path d="M1 8l6-6.600L13 8" />
        </svg>
        <div className="ml-[24px]">
          <ShieldIcon />
        </div>
        <div className="ml-[19px]">
          <OneDriveIcon />
        </div>
        <div className="ml-[23px]">
          <MicIcon />
        </div>
        <div className="-mt-0.5 ml-[24px] w-[34px] text-center text-[15px] leading-5 tracking-[-0.2px]">
          <div>ENG</div>
          <div>IN</div>
        </div>
        <div className="ml-5">
          <WifiIcon />
        </div>
        <div className="ml-[10px]">
          <SpeakerIcon />
        </div>
        <div className="ml-[10px]">
          <BatteryIcon />
        </div>
        <div className="-mt-1 ml-[18px] w-[80px] text-right text-[15px] leading-5 whitespace-nowrap">
          <div>10:19</div>
          <div className="-ml-2">14-06-2023</div>
        </div>
        <div className="ml-4">
          <BellIcon />
        </div>
      </div>
    </footer>
  );
}

export default function App() {
  return (
    <div className="flex h-[1080px] w-[1920px] flex-col overflow-hidden font-['Open_Sans','Noto_Sans','DejaVu_Sans',sans-serif]">
      <TabStrip />
      <Toolbar />
      <Calculator />
      <Taskbar />
    </div>
  );
}
